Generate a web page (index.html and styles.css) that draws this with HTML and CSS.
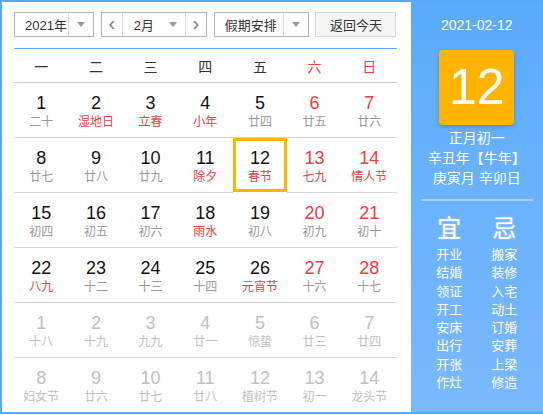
FILE: index.html
```html
<!DOCTYPE html>
<html>
<head>
  <meta charset="utf-8">
  <title>万年历</title>
  <link rel="stylesheet" href="styles.css">
</head>
<body>
  <div class="calendar">
    <div class="main">
      <div class="toolbar">
        <div class="select year">
          <span class="value">2021年</span>
          <span class="arrow"><i class="tri"></i></span>
        </div>
        <div class="select month">
          <span class="step">&lsaquo;</span>
          <span class="value">2月<i class="tri"></i></span>
          <span class="step">&rsaquo;</span>
        </div>
        <div class="select holiday">
          <span class="value">假期安排</span>
          <span class="arrow"><i class="tri"></i></span>
        </div>
        <button class="today-btn">返回今天</button>
      </div>

      <div class="week-head">
        <span>一</span><span>二</span><span>三</span><span>四</span><span>五</span>
        <span class="weekend">六</span><span class="weekend">日</span>
      </div>

      <div class="days">
        <div class="day"><b>1</b><small>二十</small></div>
        <div class="day"><b>2</b><small class="fest">湿地日</small></div>
        <div class="day"><b>3</b><small class="fest">立春</small></div>
        <div class="day"><b>4</b><small class="fest">小年</small></div>
        <div class="day"><b>5</b><small>廿四</small></div>
        <div class="day weekend"><b>6</b><small>廿五</small></div>
        <div class="day weekend"><b>7</b><small>廿六</small></div>

        <div class="day"><b>8</b><small>廿七</small></div>
        <div class="day"><b>9</b><small>廿八</small></div>
        <div class="day"><b>10</b><small>廿九</small></div>
        <div class="day"><b>11</b><small class="fest">除夕</small></div>
        <div class="day selected"><b>12</b><small class="fest">春节</small></div>
        <div class="day weekend"><b>13</b><small class="fest">七九</small></div>
        <div class="day weekend"><b>14</b><small class="fest">情人节</small></div>

        <div class="day"><b>15</b><small>初四</small></div>
        <div class="day"><b>16</b><small>初五</small></div>
        <div class="day"><b>17</b><small>初六</small></div>
        <div class="day"><b>18</b><small class="fest">雨水</small></div>
        <div class="day"><b>19</b><small>初八</small></div>
        <div class="day weekend"><b>20</b><small>初九</small></div>
        <div class="day weekend"><b>21</b><small>初十</small></div>

        <div class="day"><b>22</b><small class="fest">八九</small></div>
        <div class="day"><b>23</b><small>十二</small></div>
        <div class="day"><b>24</b><small>十三</small></div>
        <div class="day"><b>25</b><small>十四</small></div>
        <div class="day"><b>26</b><small class="fest">元宵节</small></div>
        <div class="day weekend"><b>27</b><small>十六</small></div>
        <div class="day weekend"><b>28</b><small>十七</small></div>

        <div class="day other"><b>1</b><small>十八</small></div>
        <div class="day other"><b>2</b><small>十九</small></div>
        <div class="day other"><b>3</b><small>九九</small></div>
        <div class="day other"><b>4</b><small>廿一</small></div>
        <div class="day other"><b>5</b><small>惊蛰</small></div>
        <div class="day other"><b>6</b><small>廿三</small></div>
        <div class="day other"><b>7</b><small>廿四</small></div>

        <div class="day other"><b>8</b><small>妇女节</small></div>
        <div class="day other"><b>9</b><small>廿六</small></div>
        <div class="day other"><b>10</b><small>廿七</small></div>
        <div class="day other"><b>11</b><small>廿八</small></div>
        <div class="day other"><b>12</b><small>植树节</small></div>
        <div class="day other"><b>13</b><small>初一</small></div>
        <div class="day other"><b>14</b><small>龙头节</small></div>
      </div>
    </div>

    <div class="side">
      <div class="side-date">2021-02-12</div>
      <div class="side-day">12</div>
      <div class="lunar">
        <p>正月初一</p>
        <p>辛丑年【牛年】</p>
        <p>庚寅月 辛卯日</p>
      </div>
      <div class="almanac">
        <ul>
          <li class="title">宜</li>
          <li>开业</li><li>结婚</li><li>领证</li><li>开工</li>
          <li>安床</li><li>出行</li><li>开张</li><li>作灶</li>
        </ul>
        <ul>
          <li class="title">忌</li>
          <li>搬家</li><li>装修</li><li>入宅</li><li>动土</li>
          <li>订婚</li><li>安葬</li><li>上梁</li><li>修造</li>
        </ul>
      </div>
    </div>
  </div>
</body>
</html>
```

FILE: styles.css
```css
body {
  margin: 0;
  font-family: "Liberation Sans", "Noto Sans CJK SC", sans-serif;
  color: #333;
  background: #fff;
}
.calendar {
  display: flex;
  width: 541px;
  height: 410px;
  border: 2px solid #5aa9f7;
  border-right: none;
}
.main {
  width: 384px;
  padding: 10px 12px 0;
}

/* toolbar */
.toolbar {
  display: flex;
  justify-content: space-between;
  height: 25px;
  font-size: 13px;
  white-space: nowrap;
}
.select {
  display: flex;
  box-sizing: border-box;
  height: 25px;
  border: 1px solid #b4b4b4;
  background: #fff;
}
.select .value {
  flex: 1;
  display: flex;
  align-items: center;
  padding-left: 10px;
  color: #333;
}
.select .arrow {
  width: 24px;
  border-left: 1px solid #dcdcdc;
  display: flex;
  align-items: center;
  justify-content: center;
}
.tri {
  display: inline-block;
  width: 0;
  height: 0;
  border-left: 4px solid transparent;
  border-right: 4px solid transparent;
  border-top: 5px solid #999;
}
.year { width: 80px; }
.month { width: 106px; }
.month .value {
  padding-left: 11px;
  padding-right: 8px;
  justify-content: space-between;
}
.month .step {
  width: 21px;
  display: flex;
  align-items: center;
  justify-content: center;
  font-size: 20px;
  color: #777;
  line-height: 1;
  padding-bottom: 3px;
  box-sizing: border-box;
}
.month .step:first-child { border-right: 1px solid #dcdcdc; }
.month .step:last-child { border-left: 1px solid #dcdcdc; }
.holiday { width: 95px; }
.holiday .value { padding-left: 10px; }
.today-btn {
  width: 81px;
  height: 25px;
  border: 1px solid #d9d9d9;
  background: #f6f6f6;
  font-family: inherit;
  font-size: 13px;
  color: #333;
  padding: 0;
}

/* grid */
.week-head {
  display: grid;
  grid-template-columns: repeat(7, 1fr);
  margin-top: 11px;
  border-top: 1px solid #5aa9f7;
  border-bottom: 1px solid #ccc;
  height: 33px;
  align-items: center;
  text-align: center;
  font-size: 14px;
  color: #333;
}
.week-head .weekend { color: #f03c3c; }
.days {
  display: grid;
  grid-template-columns: repeat(7, 1fr);
  grid-auto-rows: 55px;
}
.day {
  display: flex;
  flex-direction: column;
  align-items: center;
  box-sizing: border-box;
  padding-top: 10px;
  border-bottom: 1px solid #d4d4d4;
}
.day:nth-last-child(-n+7) { border-bottom: none; }
.day b {
  font-weight: normal;
  font-size: 18px;
  line-height: 20px;
  color: #111;
}
.day small {
  font-size: 12px;
  line-height: 18px;
  color: #999;
}
.day.weekend b { color: #f03c3c; }
.day small.fest { color: #f03c3c; }
.day.other b, .day.other small { color: #c0c0c0; }
.day.selected {
  border: 3px solid #ffb400;
  padding-top: 7px;
  height: 54px;
}

/* side panel */
.side {
  width: 133px;
  margin-left: 2px;
  background: linear-gradient(180deg, #5aabfb, #7ab9fe);
  color: #fff;
  text-align: center;
}
.side-date {
  font-size: 14px;
  line-height: 20px;
  margin-top: 13px;
}
.side-day {
  width: 75px;
  height: 75px;
  margin: 15px auto 0;
  background: #ffb400;
  border-radius: 4px;
  box-shadow: 0 2px 4px rgba(0, 0, 0, 0.2);
  font-size: 50px;
  line-height: 75px;
}
.lunar {
  margin-top: 3px;
  font-size: 14px;
  line-height: 20px;
}
.lunar p { margin: 0; }
.almanac {
  display: flex;
  justify-content: center;
  gap: 29px;
  margin: 11px 10px 0;
  padding-top: 12px;
  border-top: 2px solid rgba(255, 255, 255, 0.4);
}
.almanac ul {
  list-style: none;
  margin: 0;
  padding: 0;
  font-size: 13px;
  line-height: 18.3px;
}
.almanac .title {
  font-size: 24px;
  line-height: 32px;
  margin-bottom: 1px;
  text-shadow: 0 0 2px rgba(255, 255, 255, 0.6);
}
```
